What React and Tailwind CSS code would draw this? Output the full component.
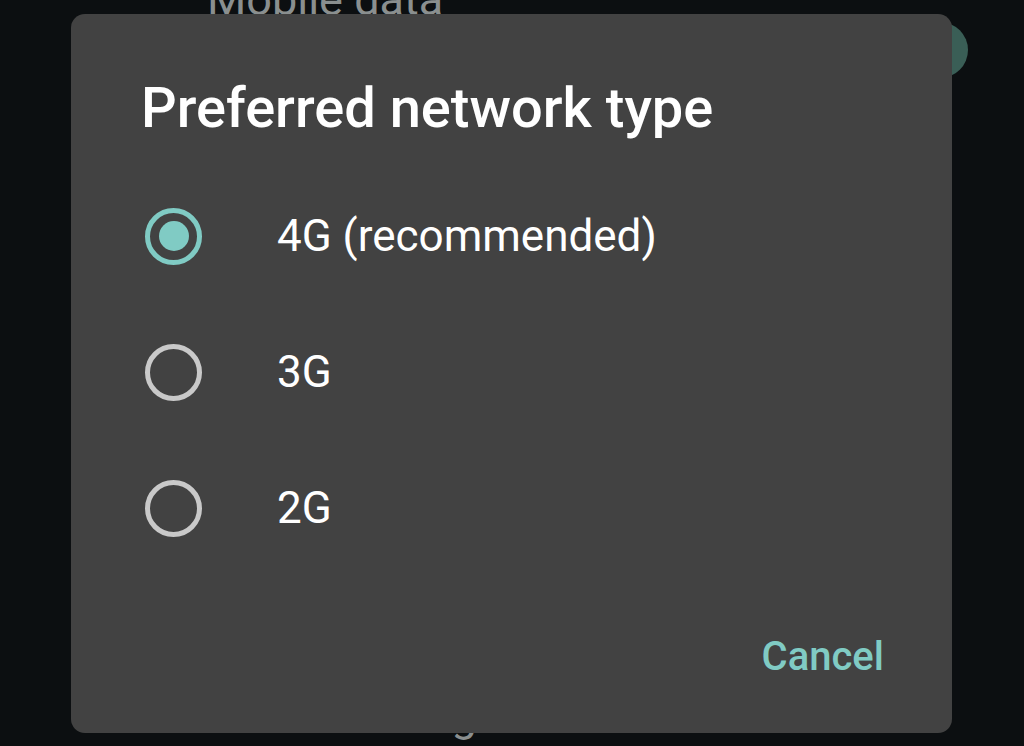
function Radio({ checked }) {
  return checked ? (
    <span className="flex h-[57px] w-[57px] items-center justify-center rounded-full border-[5px] border-[#80cbc4]">
      <span className="h-[30px] w-[30px] rounded-full bg-[#80cbc4]" />
    </span>
  ) : (
    <span className="h-[57px] w-[57px] rounded-full border-[5px] border-[#c9c9c9]" />
  );
}

const options = [
  { label: "4G (recommended)", checked: true },
  { label: "3G", checked: false },
  { label: "2G", checked: false },
];

export default function App() {
  return (
    <div className="relative h-[746px] w-[1024px] overflow-hidden bg-[#0c0f11] font-['Roboto',sans-serif]">
      {/* settings list behind the dialog */}
      <div className="flex flex-col pl-[207px]">
        <div className="-mt-[28px] flex items-start justify-between pr-[56px]">
          <span className="text-[45px] leading-[56px] text-[#8a8f8f]">Mobile data</span>
          <span className="mt-[50px] h-[56px] w-[56px] rounded-full bg-[#3a5e56]" />
        </div>
        <div className="mt-[610px] text-[45px] leading-[56px] text-[#8a8f8f]">Data roaming</div>
      </div>

      <div className="absolute left-[71px] top-[14px] flex h-[719px] w-[881px] flex-col rounded-[14px] bg-[#424242] pl-[70px] pr-[68px]">
        <h1 className="mt-[62px] text-[56px] font-medium leading-[64px] text-white">Preferred network type</h1>
        <div className="mt-[28px] flex flex-col">
          {options.map((o) => (
            <div key={o.label} className="flex h-[136px] items-center ml-[4px]">
              <Radio checked={o.checked} />
              <span className="ml-[75px] text-[44px] text-white">{o.label}</span>
            </div>
          ))}
        </div>
        <div className="mt-auto mb-[46px] flex justify-end">
          <button className="text-[40px] font-medium text-[#80cbc4]">Cancel</button>
        </div>
      </div>
    </div>
  );
}
